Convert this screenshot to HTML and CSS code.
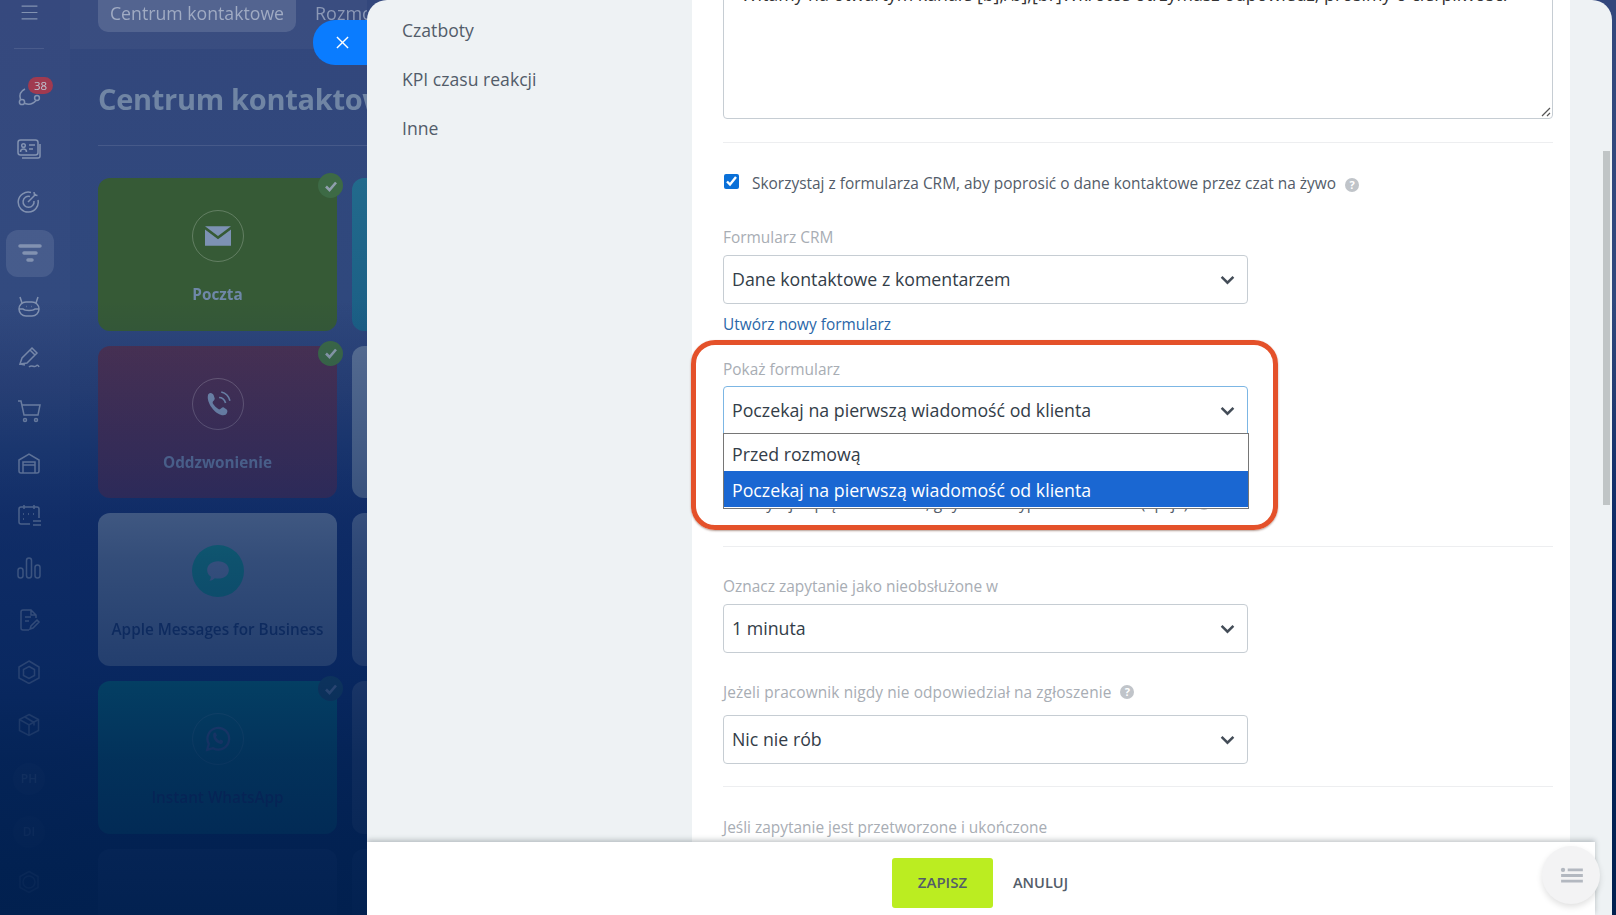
FILE: index.html
```html
<!DOCTYPE html>
<html lang="pl">
<head>
<meta charset="utf-8">
<title>Centrum kontaktowe</title>
<link rel="stylesheet" href="styles.css">
</head>
<body>
<div class="backdrop">
  <aside class="rail">
    <div class="rail-top">
      <svg class="ico" viewBox="0 0 24 24"><path d="M2 4h20M2 12h20M2 20h20"/></svg>
    </div>
    <div class="rail-list">
      <div class="rail-item">
        <svg class="ico" viewBox="0 0 24 24"><circle cx="5" cy="18" r="2.600"/><circle cx="20" cy="14" r="2.400"/><path d="M3.500 15.500C2 11 4 7 8 5M8 19.500c4 1.500 8 .5 11-3"/></svg>
        <span class="badge">38</span>
      </div>
      <div class="rail-item"><svg class="ico" viewBox="0 0 24 24"><rect x="1" y="3" width="20" height="15" rx="2.500"/><path d="M23 7v12a2 2 0 0 1-2 2H5"/><circle cx="6.500" cy="8.500" r="1.800"/><path d="M3.500 15c0-4 6-4 6 0M12 8h6M12 12h4"/></svg></div>
      <div class="rail-item"><svg class="ico" viewBox="0 0 24 24"><path d="M14 3.500A10 10 0 1 0 21 11"/><path d="M13 7.500A5.500 5.500 0 1 0 17 12"/><path d="M11 13l8-8M17 3l.5 3 3 .5"/></svg></div>
      <div class="rail-item rail-active"><svg class="ico ico-solid" viewBox="0 0 24 24"><path d="M2 5h20M6 12h12M10 19h4"/></svg></div>
      <div class="rail-item"><svg class="ico" viewBox="0 0 24 24"><rect x="2" y="8" width="20" height="14" rx="7"/><path d="M2 15h4c2 2 10 2 12 0h4M5 9L3 3M19 9l2-6M9 12.500h.5M14.500 12.500h.5"/></svg></div>
      <div class="rail-item"><svg class="ico" viewBox="0 0 24 24"><path d="M3 18l2-6L15 2l5 5-10 10zM13 4l5 5M3 18l5 1"/><path d="M12 21c3-3 5 1 7-1s3 1 3 1"/></svg></div>
      <div class="rail-item"><svg class="ico" viewBox="0 0 24 24"><path d="M1 2h3l3 14h14l2-10H5"/><circle cx="8" cy="21" r="1.500"/><circle cx="19" cy="21" r="1.500"/></svg></div>
      <div class="rail-item"><svg class="ico" viewBox="0 0 24 24"><path d="M2 9l10-6 10 6v11a2 2 0 0 1-2 2H4a2 2 0 0 1-2-2z"/><path d="M6 22v-8h12v8M6 14v-3h12v3"/></svg></div>
      <div class="rail-item"><svg class="ico" viewBox="0 0 24 24"><path d="M13 21H4a2 2 0 0 1-2-2V6a2 2 0 0 1 2-2h16a2 2 0 0 1 2 2v9M7 2v4M17 2v4M6 11h1M11 11h1M16 11h1M6 16h1M16 18h8M16 22h8"/></svg></div>
      <div class="rail-item"><svg class="ico" viewBox="0 0 24 24"><rect x="1" y="12" width="5" height="10" rx="2.500"/><rect x="9.500" y="2" width="5" height="20" rx="2.500"/><rect x="18" y="9" width="5" height="13" rx="2.500"/></svg></div>
      <div class="rail-item"><svg class="ico" viewBox="0 0 24 24"><path d="M12 22H6a2 2 0 0 1-2-2V4a2 2 0 0 1 2-2h8l5 5v3M8 9h6M8 13h4M14 2v5h5M13 21l1-3 6-6 2 2-6 6z"/></svg></div>
      <div class="rail-item"><svg class="ico" viewBox="0 0 24 24"><path d="M12 1l10 6v11l-10 5.500L2 18V7z"/><path d="M12 6.500l5.500 3v6L12 18.500l-5.500-3v-6z"/></svg></div>
      <div class="rail-item"><svg class="ico" viewBox="0 0 24 24"><path d="M12 1.500l9.500 5v11L12 22.500l-9.500-5v-11zM2.500 6.500L12 12l9.500-5.500M12 12v10.500M8 4l9 5.500v3"/></svg></div>
      <div class="rail-item"><span class="avatar">PH</span></div>
      <div class="rail-item"><span class="avatar">DI</span></div>
      <div class="rail-item"><svg class="ico" viewBox="0 0 24 24"><circle cx="12" cy="12" r="6"/><path d="M12 1.500l9 5v11l-9 5-9-5v-11z"/></svg></div>
    </div>
  </aside>
  <main class="main">
    <header class="topbar">
      <span class="tab">Centrum kontaktowe</span>
      <span class="tab-link">Rozmowy</span>
    </header>
    <h1 class="title">Centrum kontaktowe</h1>
    <div class="tiles">
      <div class="tile tile-green">
        <span class="tile-ico"><svg viewBox="0 0 24 24"><path class="fill" d="M0 3h24L12 12zM0 6v15h24V6L12 15z"/></svg></span>
        <span class="tile-name">Poczta</span>
        <span class="check"><svg viewBox="0 0 14 14"><path d="M2 7.500L5.500 11 12 3.500"/></svg></span>
      </div>
      <div class="tile tile-blue"></div>
      <div class="tile tile-maroon">
        <span class="tile-ico"><svg viewBox="0 0 24 24"><path class="fill" d="M3 3c2-2 4-1 5 1l1 3c0 2-2 2-2 4 1 2 4 5 6 6 2 0 2-2 4-2l3 2c1 1 1 3-1 5-7 3-19-11-16-19z"/><path class="line" d="M13 6c3 0 5 2 6 5M15 1c4 1 7 4 8 8"/></svg></span>
        <span class="tile-name">Oddzwonienie</span>
        <span class="check"><svg viewBox="0 0 14 14"><path d="M2 7.500L5.500 11 12 3.500"/></svg></span>
      </div>
      <div class="tile tile-slate"></div>
      <div class="tile tile-light">
        <span class="tile-ico tile-ico-solid"><svg viewBox="0 0 24 24"><path class="white" d="M12 3c6 0 10 3.500 10 8s-4 8-10 8c-1 0-2 0-3-.3-1 1-3 2.300-5 2.300 1-1 1.500-2.500 1.300-4C3 15.500 2 13.500 2 11c0-4.500 4-8 10-8z"/></svg></span>
        <span class="tile-name tile-name-dark">Apple Messages for Business</span>
      </div>
      <div class="tile tile-slate2"></div>
      <div class="tile tile-teal">
        <span class="tile-ico"><svg viewBox="0 0 24 24"><path class="line2" d="M2 22l1.500-5.500A10 10 0 1 1 7.500 20.500z"/><path class="fill2" d="M8 6.500c1-1 2-.5 2.500 1l.5 1.500-1 1c.5 1.500 2 3 3.500 3.500l1-1 2 1c.5 1 0 2.500-1.500 3C11 17 6 11 8 6.500z"/></svg></span>
        <span class="tile-name tile-name-dark">Instant WhatsApp</span>
        <span class="check check-dark"><svg viewBox="0 0 14 14"><path d="M2 7.500L5.500 11 12 3.500"/></svg></span>
      </div>
      <div class="tile tile-slate3"></div>
      <div class="tile tile-navy"></div>
      <div class="tile tile-navy"></div>
    </div>
  </main>
</div>

<div class="close-tab"><svg viewBox="0 0 14 14"><path d="M1 1l12 12M13 1L1 13"/></svg></div>

<section class="panel">
  <div class="panel-body">
    <nav class="side-nav">
      <a class="side-link">Czatboty</a>
      <a class="side-link">KPI czasu reakcji</a>
      <a class="side-link">Inne</a>
    </nav>
    <div class="content">
      <div class="textarea">
        <span class="textarea-text">Witamy na otwartym kanale [b];/b];[br]Wkrótce otrzymasz odpowiedź, prosimy o cierpliwość.</span>
        <svg class="grip" viewBox="0 0 10 10"><path d="M1 9l8-8M6 9l3-3"/></svg>
      </div>
      <div class="divider divider-a"></div>
      <label class="check-row check-row-a">
        <input class="cb" type="checkbox" checked>
        <span>Skorzystaj z formularza CRM, aby poprosić o dane kontaktowe przez czat na żywo</span>
        <span class="help help-low">?</span>
      </label>
      <div class="label label-crm">Formularz CRM</div>
      <div class="select select-crm">
        <span>Dane kontaktowe z komentarzem</span>
        <svg class="chev" viewBox="0 0 14 9"><path d="M1.500 1.500L7 7l5.500-5.500"/></svg>
      </div>
      <a class="link">Utwórz nowy formularz</a>

      <div class="focus-group">
        <div class="annotation"></div>
        <div class="label">Pokaż formularz</div>
        <div class="select select-open">
          <span>Poczekaj na pierwszą wiadomość od klienta</span>
          <svg class="chev" viewBox="0 0 14 9"><path d="M1.500 1.500L7 7l5.500-5.500"/></svg>
          <div class="dropdown">
            <div class="option">Przed rozmową</div>
            <div class="option option-on">Poczekaj na pierwszą wiadomość od klienta</div>
          </div>
        </div>
        <label class="check-row check-row-b">
          <input class="cb" type="checkbox" checked>
          <span>Wyślij kopię wiadomości, gdy klient wypełni formularz (opcja)</span>
          <span class="help">?</span>
        </label>
      </div>

      <div class="divider divider-b"></div>
      <div class="label label-c">Oznacz zapytanie jako nieobsłużone w</div>
      <div class="select select-c">
        <span>1 minuta</span>
        <svg class="chev" viewBox="0 0 14 9"><path d="M1.500 1.500L7 7l5.500-5.500"/></svg>
      </div>
      <div class="label label-d">Jeżeli pracownik nigdy nie odpowiedział na zgłoszenie <span class="help">?</span></div>
      <div class="select select-d">
        <span>Nic nie rób</span>
        <svg class="chev" viewBox="0 0 14 9"><path d="M1.500 1.500L7 7l5.500-5.500"/></svg>
      </div>
      <div class="divider divider-c"></div>
      <div class="label label-e">Jeśli zapytanie jest przetworzone i ukończone</div>
    </div>
    <div class="gutter"><div class="scroll-thumb"></div></div>
  </div>
  <footer class="footer">
    <button class="btn-save">ZAPISZ</button>
    <button class="btn-cancel">ANULUJ</button>
  </footer>
  <div class="fab">
    <svg viewBox="0 0 24 18"><circle cx="3" cy="3" r="2.300"/><path d="M8 1.500h16v3H8zM1 7.500h23v3H1zM1 13.500h23v3H1z"/></svg>
  </div>
</section>
</body>
</html>
```
FILE: styles.css
```css
* { box-sizing: border-box; }
html, body { margin: 0; height: 915px; overflow: hidden; }
body { font-family: "Open Sans", "Noto Sans", sans-serif; background: #01204f; color: #525c69; position: relative; }

/* Dimmed page behind the slider */
.backdrop {
  display: flex;
  width: 1616px;
  height: 915px;
  position: relative;
  overflow: hidden;
  filter: blur(.5px);
  background: linear-gradient(180deg, #33477c 0, #2f487d 300px, #2a4177 390px, #1f3a74 450px, #173270 520px, #0f3070 700px, #01204f 915px);
}
.backdrop::after {
  content: "";
  position: absolute;
  inset: 0;
  pointer-events: none;
  background: linear-gradient(180deg, rgba(1,32,79,0) 0, rgba(1,32,79,0) 300px, rgba(6,36,90,.3) 460px, rgba(6,36,90,.55) 560px, rgba(6,36,90,.7) 660px, rgba(3,34,84,.85) 760px, rgba(1,32,79,.97) 915px);
}
.rail { width: 70px; flex: none; background: rgba(255,255,255,.015); display: flex; flex-direction: column; align-items: flex-start; }
.rail-top { height: 49px; width: 58px; position: relative; display: flex; justify-content: center; padding-top: 3px; }
.rail-top::after { content: ""; position: absolute; left: 14px; right: 14px; bottom: 0; height: 1px; background: rgba(255,255,255,.1); }
.rail-top .ico { width: 19px; height: 19px; }
.rail-list { padding-top: 21px; width: 58px; }
.rail-item { height: 52.400px; display: flex; align-items: center; justify-content: center; position: relative; }
.rail-active { background: rgba(255,255,255,.1); border-radius: 12px; height: 47px; margin: 2.700px 4px 2.700px 6px; width: 48px; }
.ico { width: 24px; height: 24px; fill: none; stroke: #8292b1; stroke-width: 1.500; }
.ico-solid { stroke-width: 3.500; stroke-linecap: round; }
.badge { position: absolute; left: 28px; top: 7px; width: 25px; height: 17px; border-radius: 9px; background: #a03a50; color: #bfc5d2; font-size: 11.500px; line-height: 17px; text-align: center; }
.avatar { width: 32px; height: 32px; margin-top: 4px; border-radius: 50%; background: rgba(255,255,255,.07); color: #6f82a4; font-size: 12px; font-weight: 600; line-height: 32px; text-align: center; }

.main { width: 297px; flex: none; overflow: hidden; padding-left: 28px; }
.topbar { height: 49px; width: 300px; margin-left: -28px; padding-left: 28px; background: rgba(255,255,255,.035); display: flex; align-items: flex-start; }
.tab { height: 32px; width: 198px; flex: none; border-radius: 0 0 10px 10px; background: rgba(255,255,255,.13); color: #a0abc3; font-size: 17.700px; line-height: 26px; text-align: center; white-space: nowrap; }
.tab-link { margin-left: 19px; color: #8b98b6; font-size: 18px; line-height: 26px; }
.title { margin: 27px 0 0; height: 70px; line-height: 46px; font-size: 29px; font-weight: 700; letter-spacing: -.3px; color: #7085a4; border-bottom: 1px solid rgba(255,255,255,.1); white-space: nowrap; overflow: hidden; }
.tiles { margin-top: 32px; display: grid; grid-template-columns: 239px 239px; grid-auto-rows: 152.700px; gap: 15px; }
.tile { position: relative; border-radius: 12px; display: flex; flex-direction: column; align-items: center; padding-top: 32px; }
.tile-green { background: #365a36; }
.tile-blue { background: linear-gradient(#226a8c, #1b5f85); }
.tile-maroon { background: linear-gradient(#4c3152, #452e58); }
.tile-slate { background: #5a7094; }
.tile-light { background: #6b7f9f; }
.tile-slate2 { background: #5b7096; }
.tile-teal { background: #008a80; }
.tile-slate3 { background: #4f648c; }
.tile-navy { background: #2c4a80; }
.tile-ico { width: 52px; height: 52px; border-radius: 50%; border: 1px solid rgba(255,255,255,.22); display: flex; align-items: center; justify-content: center; }
.tile-ico svg { width: 26px; height: 26px; }
.tile-ico-solid { border: 0; background: #188a86; }
.tile-ico .fill { fill: #7d92b4; }
.tile-ico .line { fill: none; stroke: #7d92b4; stroke-width: 1.500; }
.tile-ico .line2 { fill: none; stroke: #6d80aa; stroke-width: 2; }
.tile-ico .fill2 { fill: #6d80aa; }
.tile-ico .white { fill: #6d82a5; }
.tile-name { margin-top: 21px; font-size: 15.300px; font-weight: 700; line-height: 22px; color: #6f88a8; white-space: nowrap; }
.tile-maroon .tile-name { color: #66789e; }
.tile-name-dark { color: #1c3768; font-weight: 600; }
.check { position: absolute; right: -6px; top: -5px; width: 25px; height: 25px; border-radius: 50%; background: #3d6a45; display: flex; align-items: center; justify-content: center; }
.check svg { width: 14px; height: 14px; fill: none; stroke: #8f9fad; stroke-width: 2.600; }
.check-dark { background: #1f5a66; }
.check-dark svg { stroke: #8fa3b8; }

/* Close tab */
.close-tab { position: absolute; left: 313px; top: 20px; width: 60px; height: 45px; border-radius: 22px 0 0 22px; background: #0a7cff; display: flex; align-items: center; padding-left: 23px; }
.close-tab svg { width: 13px; height: 13px; fill: none; stroke: #fff; stroke-width: 1.500; }

/* Slider panel */
.panel { position: absolute; left: 367px; top: 0; width: 1245px; height: 915px; background: #eef2f4; border-radius: 20px 20px 0 0; display: flex; flex-direction: column; overflow: hidden; }
.panel-body { height: 842px; flex: none; display: flex; overflow: hidden; }
.side-nav { width: 325px; flex: none; padding: 6px 0 0 35px; display: flex; flex-direction: column; }
.side-link { height: 49px; line-height: 49px; font-size: 17.600px; color: #525c69; }
.content { width: 878px; flex: none; background: #fff; padding: 0 17px 0 31px; }
.gutter { width: 42px; flex: none; padding: 151px 0 0 33px; }
.scroll-thumb { width: 7px; height: 354px; background: #c0c5c6; }

.textarea { position: relative; height: 149px; margin-top: -30px; border: 1px solid #c6cdd3; border-radius: 4px; padding: 11px 17px 0; font-size: 17.800px; line-height: 24px; color: #333; white-space: nowrap; overflow: hidden; }
.textarea-text { display: block; }
.grip { position: absolute; right: 1px; bottom: 1px; width: 10px; height: 10px; fill: none; stroke: #555; stroke-width: 1.200; }
.divider { height: 1px; background: #edeef0; }
.divider-a { margin-top: 23px; }
.divider-b { margin-top: 33px; }
.divider-c { margin-top: 22px; }
.check-row { display: flex; align-items: center; height: 20px; font-size: 15.450px; line-height: 20px; color: #535c69; white-space: nowrap; }
.check-row-a { margin-top: 30px; }
.check-row-b { margin-top: 59px; }
.cb { width: 15px; height: 15px; margin: -3px 13px 0 1px; flex: none; accent-color: #0a70d8; }
.label { height: 20px; font-size: 15.450px; line-height: 20px; color: #a8adb4; white-space: nowrap; display: flex; align-items: center; }
.label-crm { margin-top: 34px; }
.label-c { margin-top: 29px; }
.label-d { margin-top: 29px; letter-spacing: .1px; }
.label-e { margin-top: 30px; }
.help { flex: none; display: inline-block; width: 14px; height: 14px; margin-left: 9px; border-radius: 50%; background: #c0c4c9; color: #fff; font-size: 11px; font-weight: 700; line-height: 14px; text-align: center; letter-spacing: 0; }
.help-low { margin-top: 3px; }
.select { position: relative; width: 525px; height: 49px; border: 1px solid #c6cdd3; border-radius: 4px; padding: 0 0 2px 8px; display: flex; align-items: center; justify-content: space-between; font-size: 17.750px; color: #333d48; background: #fff; margin-top: 8px; white-space: nowrap; }
.select-open { height: 48px; margin-top: 7px; padding-bottom: 0; border-color: #7cb6e4; border-radius: 4px 4px 0 0; }
.select-d { margin-top: 13px; }
.chev { width: 15px; height: 10px; margin: 2px 12px 0 0; fill: none; stroke: #434c57; stroke-width: 2.300; }
.link { display: block; margin-top: 11px; height: 20px; font-size: 15.400px; line-height: 20px; color: #2a66a8; }
.focus-group { position: relative; margin-top: 24px; }
.annotation { position: absolute; left: -32px; top: -19px; width: 587px; height: 190px; border: 5px solid #e4512a; border-radius: 24px; box-shadow: 0 1px 2px rgba(90,40,20,.45); z-index: 3; pointer-events: none; }
.dropdown { position: absolute; left: -1px; top: 100%; width: 526px; height: 76px; background: #fff; border: 1px solid #767676; border-bottom-width: 1px; padding-bottom: 1px; z-index: 2; }
.option { height: 37px; padding-left: 8px; font-size: 17.750px; line-height: 41px; color: #333d48; }
.option-on { background: #1a67d2; color: #fff; height: 36px; line-height: 39px; }

.footer { height: 73px; width: 1228px; flex: none; background: #fff; box-shadow: 0 -2px 5px rgba(40,50,60,.28); display: flex; align-items: center; justify-content: center; gap: 20px; padding: 9px 2px 0 0; position: relative; }
.btn-save { width: 101px; height: 50px; border: 0; border-radius: 3px; background: #bbed21; font: 600 15px "Open Sans", sans-serif; color: #535c69; padding: 0 0 2px; }
.btn-cancel { border: 0; background: none; padding: 0 0 2px; font: 600 14.600px "Open Sans", sans-serif; color: #535c69; }
.fab { position: absolute; left: 1175px; top: 846px; width: 58px; height: 58px; border-radius: 50%; background: #f3f3f4; box-shadow: 0 3px 6px rgba(0,0,0,.12); display: flex; align-items: center; justify-content: center; }
.fab svg { width: 23px; height: 17px; fill: #b3b8c0; }
```
